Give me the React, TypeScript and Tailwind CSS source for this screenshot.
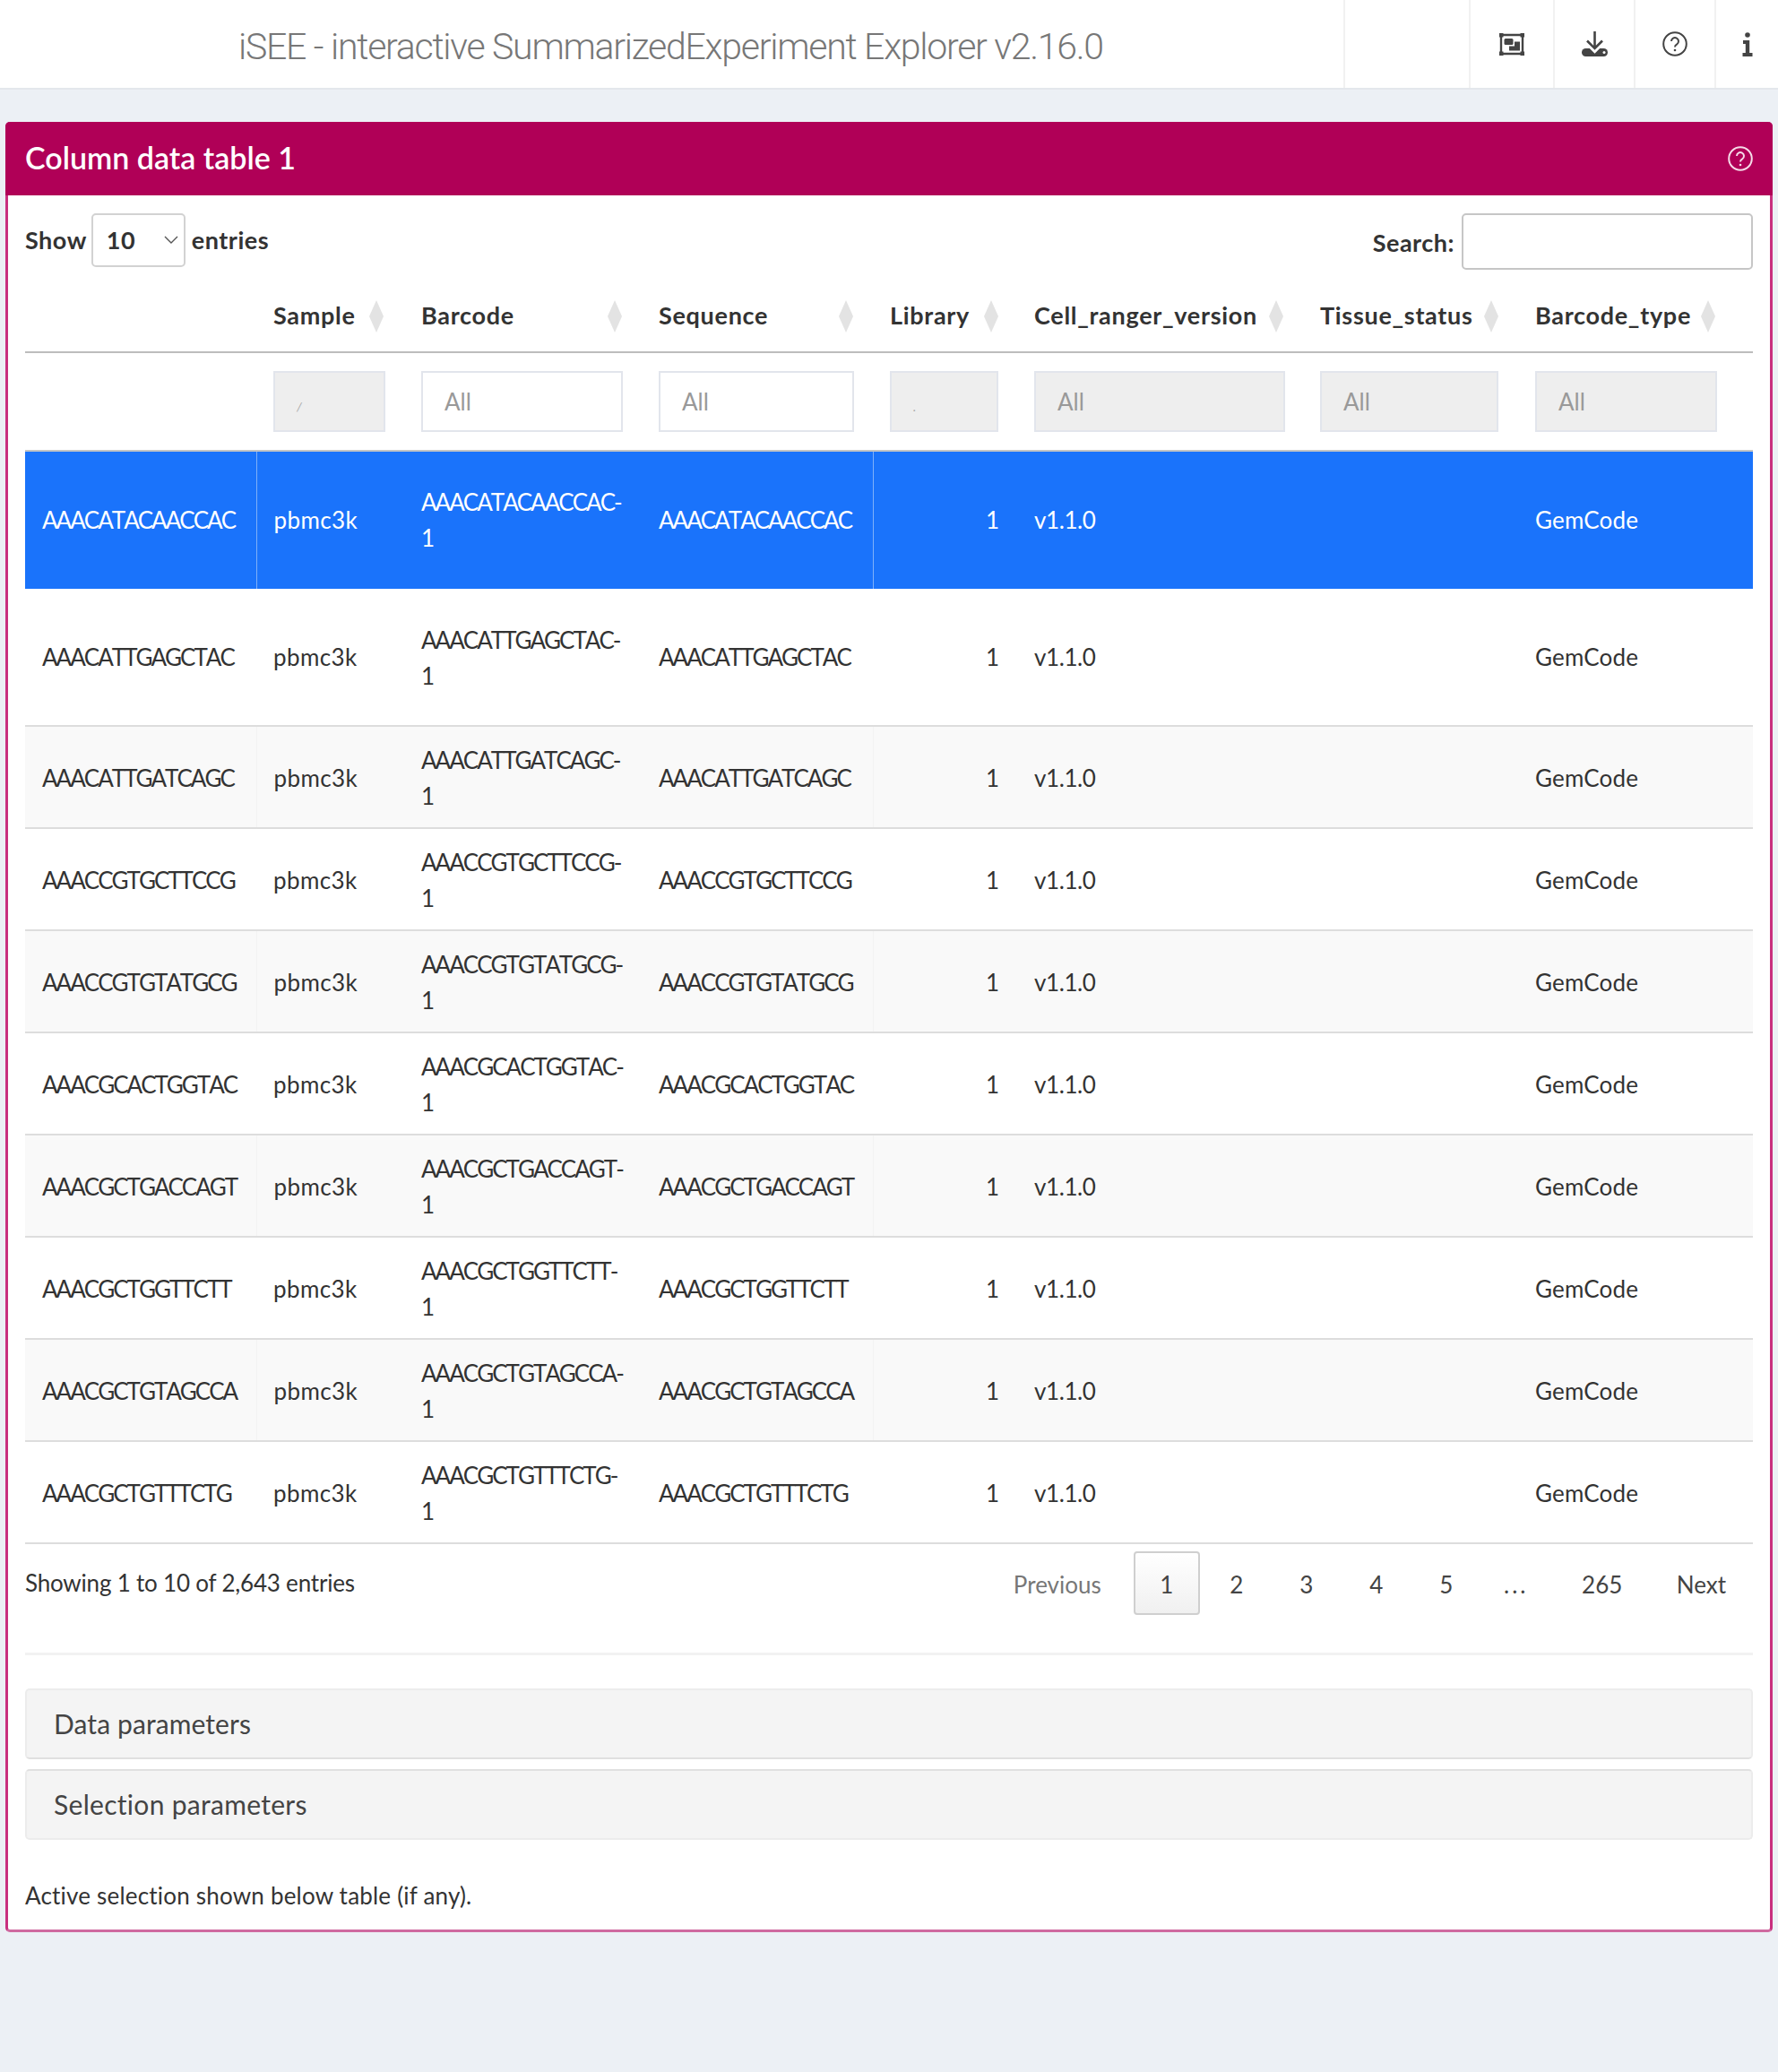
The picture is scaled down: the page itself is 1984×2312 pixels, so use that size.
const barcodes = [
  'AAACATACAACCAC',
  'AAACATTGAGCTAC',
  'AAACATTGATCAGC',
  'AAACCGTGCTTCCG',
  'AAACCGTGTATGCG',
  'AAACGCACTGGTAC',
  'AAACGCTGACCAGT',
  'AAACGCTGGTTCTT',
  'AAACGCTGTAGCCA',
  'AAACGCTGTTTCTG'
];

const SortIcon = () => (
  <svg width="16" height="36" viewBox="0 0 16 36" className="shrink-0">
    <path d="M8 0 L16 18 L8 36 L0 18 Z" fill="#e3e3e3" />
  </svg>
);

const HelpIcon = ({ color }: { color: string }) => (
  <svg width="28" height="28" viewBox="0 0 28 28" fill="none" stroke={color} strokeWidth="2">
    <circle cx="14" cy="14" r="12.8" />
    <path d="M10 11 a4 4 0 1 1 6.2 3.4 c-1.5 .9 -2.2 1.4 -2.2 3.2" />
    <circle cx="14" cy="21" r="1.3" fill={color} stroke="none" />
  </svg>
);

const GroupIcon = () => (
  <svg width="28" height="25" viewBox="0 0 28 25" fill="#444">
    <path d="M2 2 H26 V23 H2 Z" fill="none" stroke="#444" strokeWidth="2.4" />
    <rect x="0" y="0" width="4.5" height="4.5" />
    <rect x="23.5" y="0" width="4.5" height="4.5" />
    <rect x="0" y="20.5" width="4.5" height="4.5" />
    <rect x="23.5" y="20.5" width="4.5" height="4.5" />
    <rect x="5.5" y="6" width="10" height="7" rx="1.5" />
    <path d="M17 9.5 H23 V19.5 H11 V14.5 H17 Z" />
  </svg>
);

const DownloadIcon = () => (
  <svg width="29" height="28" viewBox="0 0 29 28" fill="none">
    <rect x="0" y="19" width="29" height="9" rx="4.5" fill="#444" />
    <path d="M5 11 L14.5 20.5 L24 11" stroke="#fff" strokeWidth="6" />
    <path d="M14.5 0 V18 M6 10.5 L14.5 19 L23 10.5" stroke="#444" strokeWidth="2.6" />
    <circle cx="25" cy="23.5" r="1.5" fill="#fff" />
  </svg>
);

const InfoIcon = () => (
  <svg width="12" height="27" viewBox="0 0 12 27" fill="#444">
    <circle cx="6" cy="3" r="2.8" />
    <path d="M1 9 H8.2 V23 H11.5 V27 H0.5 V23 H3.8 V13 H1 Z" />
  </svg>
);

const headers = [
  { label: 'Sample', w: 'w-[165px]', iw: 'w-[125px]', pr: 'pr-[23px]', dis: true, ph: '/' },
  { label: 'Barcode', w: 'w-[265px]', iw: 'w-[225px]', pr: 'pr-[22px]', dis: false, ph: 'All' },
  { label: 'Sequence', w: 'w-[258px]', iw: 'w-[218px]', pr: 'pr-[22px]', dis: false, ph: 'All' },
  { label: 'Library', w: 'w-[161px]', iw: 'w-[121px]', pr: 'pr-[21px]', dis: true, ph: '.' },
  { label: 'Cell_ranger_version', w: 'w-[319px]', iw: 'w-[280px]', pr: 'pr-[22px]', dis: true, ph: 'All' },
  { label: 'Tissue_status', w: 'w-[240px]', iw: 'w-[199px]', pr: 'pr-[22px]', dis: true, ph: 'All' },
  { label: 'Barcode_type', w: 'w-[262px]', iw: 'w-[203px]', pr: 'pr-[42px]', dis: true, ph: 'All' }
];

const App = () => {
  return (
    <div className="min-h-[2312px] bg-[#ecf0f5] font-['Lato','Noto_Sans',sans-serif] text-[26px] text-[#333]">
      <header className="flex h-[100px] border-b-2 border-[#e4e7ec] bg-white">
        <div className="w-[1499px] whitespace-nowrap pl-[266px] pt-[27px] font-['Roboto',sans-serif] text-[41px] leading-[50px] font-light tracking-[-1.27px] text-[#777]">
          iSEE - interactive SummarizedExperiment Explorer v2.16.0
        </div>
        <div className="w-[140px] border-l-2 border-[#f1f1f1]" />
        <div className="flex w-[94px] items-center justify-center border-l-2 border-[#f1f1f1]">
          <GroupIcon />
        </div>
        <div className="flex w-[90px] items-center justify-center border-l-2 border-[#f1f1f1]">
          <DownloadIcon />
        </div>
        <div className="flex w-[90px] items-center justify-center border-l-2 border-[#f1f1f1]">
          <HelpIcon color="#444" />
        </div>
        <div className="flex w-[71px] items-center justify-center border-l-2 border-[#f1f1f1]">
          <InfoIcon />
        </div>
      </header>

      <div className="ml-[6px] mt-[36px] h-[2020px] w-[1972px] rounded-[5px] border-x-[3px] border-b-[3px] border-x-[#c9307f] border-b-[#cf6aa0] bg-white">
        <div className="-mx-[3px] flex h-[82px] items-center justify-between rounded-t-[5px] bg-[#b00057] pl-[22px] pr-[22px] text-[34px] font-semibold text-white">
          <span className="pb-[3px]">Column data table 1</span>
          <HelpIcon color="#f5dbe8" />
        </div>

        <div className="pl-[19px] pr-[19px]">
          <div className="flex h-[88px] items-start justify-between pt-[20px] text-[27px] font-bold tracking-[0.5px]">
            <div className="flex items-center gap-[5px]">
              <span>Show</span>
              <div className="flex h-[60px] w-[105px] items-center justify-between rounded-[5px] border-2 border-[#d2d2d2] pl-[15px] pr-[6px]">
                <span>10</span>
                <svg width="16" height="10" viewBox="0 0 16 10" fill="none" stroke="#555" strokeWidth="1.4">
                  <path d="M1 1 L8 8 L15 1" />
                </svg>
              </div>
              <span className="pl-[2px]">entries</span>
            </div>
            <div className="flex items-center gap-[8px]">
              <span className="pt-[4px]">Search:</span>
              <div className="h-[63px] w-[325px] rounded-[5px] border-2 border-[#c6c6c6]" />
            </div>
          </div>

          <table className="w-[1928px] table-fixed border-collapse">
            <thead>
              <tr className="h-[87px] border-b-2 border-[#bdbdbd]">
                <th className="w-[258px]" />
                {headers.map(h => (
                  <th key={h.label} className={`${h.w} ${h.pr} pl-[19px] pt-[7px] text-left text-[27px] font-bold tracking-[0.7px]`}>
                    <div className="flex items-center justify-between">
                      <span>{h.label}</span>
                      <SortIcon />
                    </div>
                  </th>
                ))}
              </tr>
              <tr className="h-[110px] border-b-2 border-[#c4c4c4]">
                <th />
                {headers.map(h => (
                  <th key={h.label} className="pl-[19px] text-left font-normal">
                    <div
                      className={`flex h-[68px] ${h.iw} items-center border-2 border-[#e2e5ec] pl-[24px] ${h.ph === 'All' ? 'text-[#999]' : 'pt-[10px] text-[14px] text-[#aaa] italic'} ${h.dis ? 'bg-[#eeeeee]' : 'bg-white'}`}
                    >
                      {h.ph}
                    </div>
                  </th>
                ))}
              </tr>
            </thead>
            <tbody>
              {barcodes.map((code, index) => {
                const selected = index === 0;
                const tall = index < 2;
                const striped = index >= 2 && index % 2 === 0;
                const divider = selected ? 'border-r border-[#7fb0f8]' : striped ? 'border-r border-[#f3f3f3]' : '';
                return (
                  <tr
                    key={code}
                    className={`${tall ? 'h-[153.5px]' : 'h-[114px]'} ${selected ? 'bg-[#1a73fb] text-white' : 'border-b-2 border-[#dddddd] [&>td]:pt-[2px]'} ${striped ? 'bg-[#f9f9f9]' : ''} ${index === 9 ? 'border-[#bdbdbd]' : ''}`}
                  >
                    <td className={`pl-[19px] tracking-[-2px] [font-kerning:none] ${divider}`}>{code}</td>
                    <td className="pl-[19px] tracking-[0.4px]">pbmc3k</td>
                    <td className="pl-[19px] leading-[40px]">
                      <span className="tracking-[-2px] [font-kerning:none]">{code}-</span>
                      <br />1
                    </td>
                    <td className={`pl-[19px] tracking-[-2px] [font-kerning:none] ${divider}`}>{code}</td>
                    <td className="pr-[20px] text-right">1</td>
                    <td className="pl-[19px] tracking-[-0.4px]">v1.1.0</td>
                    <td />
                    <td className="pl-[19px] tracking-[0.2px]">GemCode</td>
                  </tr>
                );
              })}
            </tbody>
          </table>

          <div className="flex h-[121px] justify-between">
            <div className="pt-[24px] tracking-[-0.2px]">Showing 1 to 10 of 2,643 entries</div>
            <div className="flex items-start pt-[8px] pr-[30px] text-[#444]">
              <span className="flex h-[71px] items-center pt-[3px] pr-[36px] text-[#777]">Previous</span>
              <span className="flex h-[71px] w-[74px] items-center justify-center rounded-[4px] border-2 border-[#cfcfcf] bg-gradient-to-b from-white to-[#f0f0f0] pt-[3px]">1</span>
              <span className="flex h-[71px] w-[80px] items-center justify-center pl-[2px] pt-[3px]">2</span>
              <span className="flex h-[71px] w-[78px] items-center justify-center pt-[3px]">3</span>
              <span className="flex h-[71px] w-[78px] items-center justify-center pt-[3px]">4</span>
              <span className="flex h-[71px] w-[78px] items-center justify-center pt-[3px]">5</span>
              <span className="flex h-[71px] w-[78px] items-center justify-center pt-[3px] tracking-[3px]">...</span>
              <span className="flex h-[71px] w-[114px] items-center justify-center pt-[3px]">265</span>
              <span className="flex h-[71px] items-center pt-[3px] pl-[26px]">Next</span>
            </div>
          </div>

          <div className="h-[3px] bg-[#f2f2f2]" />

          <div className="mt-[37px] flex h-[79px] items-center rounded-[5px] border-2 border-[#ececec] border-b-[#e0e0e0] bg-[#f4f4f4] pl-[30px] text-[30px] tracking-[0.1px] text-[#444]">
            Data parameters
          </div>
          <div className="mt-[11px] flex h-[79px] items-center rounded-[5px] border-2 border-[#ececec] border-t-[#e0e0e0] bg-[#f4f4f4] pl-[30px] text-[30px] tracking-[0.3px] text-[#444]">
            Selection parameters
          </div>
          <div className="mt-[43px] tracking-[0.2px]">Active selection shown below table (if any).</div>
        </div>
      </div>
    </div>
  );
};

export default App;
